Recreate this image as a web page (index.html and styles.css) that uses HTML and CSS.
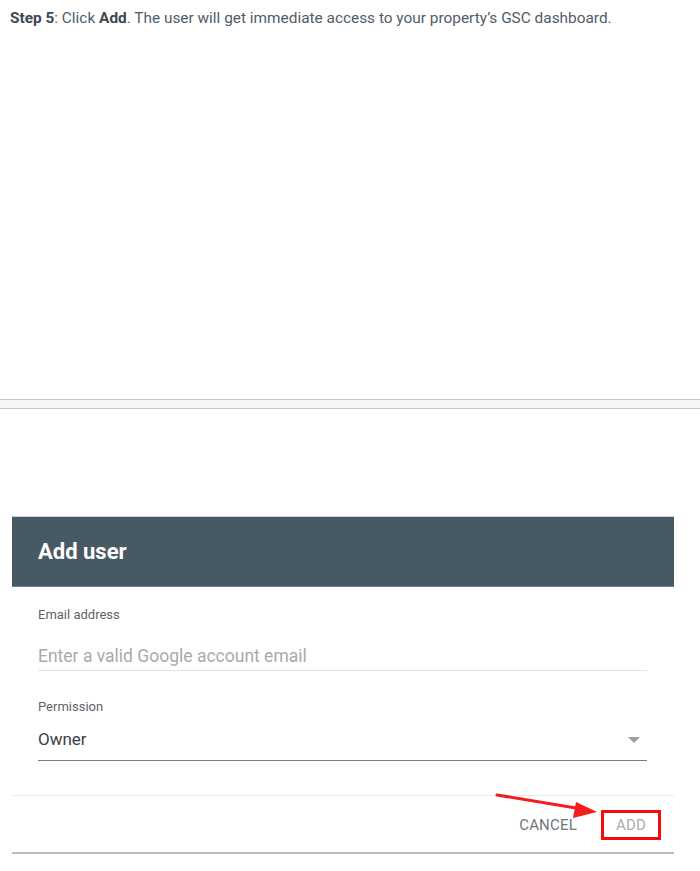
FILE: index.html
```html
<!DOCTYPE html>
<html>
<head>
<meta charset="utf-8">
<link rel="stylesheet" href="styles.css">
</head>
<body>
<p class="step"><b>Step 5</b>: Click <b>Add</b>. The user will get immediate access to your property’s GSC dashboard.</p>
<div class="band"></div>
<div class="dialog">
  <div class="dialog-head">Add user</div>
  <div class="dialog-body">
    <div class="label first">Email address</div>
    <div class="input placeholder">Enter a valid Google account email</div>
    <div class="label second">Permission</div>
    <div class="select">
      <span>Owner</span>
      <svg class="caret" width="12" height="6" viewBox="0 0 12 6"><polygon points="0,0 12,0 6,6" fill="#9e9e9e"/></svg>
    </div>
  </div>
  <div class="dialog-foot">
    <span class="btn cancel">CANCEL</span>
    <span class="btn add">ADD</span>
  </div>
</div>
<svg class="arrow" width="700" height="871" viewBox="0 0 700 871">
  <line x1="497" y1="795" x2="582" y2="809" stroke="#f21d1d" stroke-width="3" stroke-linecap="round"/>
  <polygon points="597,812 576,802 573,818" fill="#f21d1d"/>
</svg>
</body>
</html>
```
FILE: styles.css
```css
html, body {
  margin: 0;
  padding: 0;
  background: #ffffff;
}
body {
  position: relative;
  width: 700px;
  height: 871px;
  overflow: hidden;
  font-family: Roboto, "Noto Sans", Arial, sans-serif;
}
.step {
  margin: 0;
  padding: 8px 0 0 10px;
  font-size: 15.4px;
  line-height: 20px;
  color: #505c68;
}
.step b {
  font-weight: 700;
  color: #3e4953;
}
.band {
  margin-top: 371px;
  height: 8px;
  border-top: 1px solid #c6c9cd;
  border-bottom: 1px solid #c6c9cd;
  background: #f5f6f8;
}
.dialog {
  margin: 107px 0 0 12px;
  width: 662px;
}
.dialog-head {
  height: 71px;
  box-sizing: border-box;
  border-top: 1px solid #c9ced1;
  background: #475a64;
  color: #ffffff;
  font-size: 22px;
  font-weight: 700;
  line-height: 69px;
  padding-left: 26px;
  border-bottom: 1px solid #6e7d85;
}
.dialog-body {
  padding: 0 27px 0 26px;
}
.label {
  font-size: 13px;
  line-height: 16px;
  color: #5f6368;
}
.label.first {
  padding-top: 20px;
}
.label.second {
  margin-top: 28px;
}
.input {
  margin-top: 21px;
  font-size: 17.5px;
  line-height: 24px;
  padding-bottom: 2px;
  border-bottom: 1px solid #e3e3e3;
}
.placeholder {
  color: #a9aaac;
}
.select {
  margin-top: 12px;
  display: flex;
  justify-content: space-between;
  align-items: center;
  font-size: 17px;
  line-height: 24px;
  color: #3c4043;
  padding-bottom: 9px;
  border-bottom: 1px solid #7a7a7a;
}
.caret {
  margin-right: 7px;
  margin-top: 2px;
}
.dialog-foot {
  margin-top: 34px;
  height: 59px;
  box-sizing: border-box;
  border-top: 1px solid #ebebeb;
  border-bottom: 2px solid #bdbdbd;
  display: flex;
  justify-content: flex-end;
  align-items: center;
  padding-right: 13px;
}
.btn {
  font-size: 15px;
  font-weight: 400;
  letter-spacing: 0.2px;
}
.cancel {
  color: #6f767d;
  margin-right: 24px;
  margin-top: 2px;
}
.add {
  color: #a9acb0;
  width: 60px;
  height: 30px;
  box-sizing: border-box;
  border: 3px solid #f20d0d;
  display: flex;
  align-items: center;
  justify-content: center;
  margin-top: 2px;
}
.arrow {
  position: absolute;
  left: 0;
  top: 0;
  pointer-events: none;
}
```
